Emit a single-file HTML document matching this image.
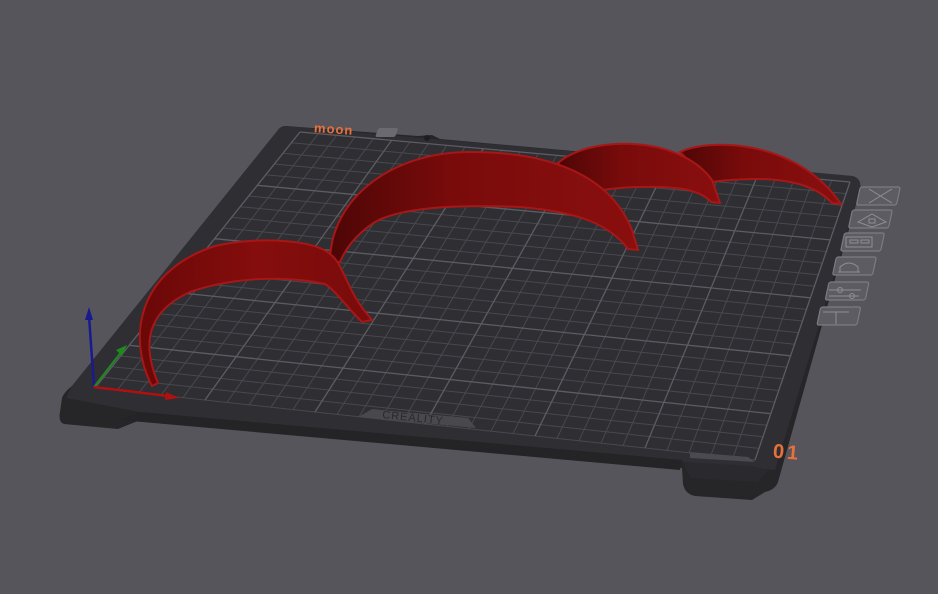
<!DOCTYPE html>
<html><head><meta charset="utf-8"><style>
html,body{margin:0;padding:0;background:#55555b;overflow:hidden}
svg{display:block}
</style></head><body>
<svg id="s" width="938" height="594" viewBox="0 0 938 594" xmlns="http://www.w3.org/2000/svg">
<defs>
<linearGradient id="r1" x1="0" x2="1" y1="0" y2="0"><stop offset="0" stop-color="#6a0808"/><stop offset="0.5" stop-color="#850d0d"/><stop offset="1" stop-color="#7a0c0c"/></linearGradient>
<linearGradient id="r2" x1="0" x2="1" y1="0" y2="0"><stop offset="0" stop-color="#4e0606"/><stop offset="0.4" stop-color="#7a0b0b"/><stop offset="1" stop-color="#8a0f0f"/></linearGradient>
</defs>
<rect width="938" height="594" fill="#55555b"/>
<path d="M286,126 L418,136 L432,135 L440,139 L852,176 Q862,178 860,190 L778,482 Q775,490 765,492 L752,500 L695,496 Q685,494 683,484 L682,468 L140,420 L118,429 L64,424 Q58,422 60,412 L62,398 Q64,392 72,386 L278,130 Q281,126 286,126 Z" fill="#262629"/>
<path d="M286,126 L852,176 Q862,178 860,190 L775,470 L140,412 L66,398 L72,386 L278,130 Q281,126 286,126 Z" fill="#2e2e33"/>
<path d="M120,420 L680,470 L682,460 L140,412 Z" fill="#242427"/>
<path d="M683,462 L752,466 L768,470 L758,482 L690,478 Z" fill="#2a2a2e"/>
<g id="grid" stroke="#4a4a50" stroke-width="1" fill="none"></g>
<path d="M358,417 L372,409 L468,418 L476,428 Z" fill="#48484d"/>
<text x="382" y="422" font-family="Liberation Sans,sans-serif" font-size="11" fill="#2a2a2e" transform="rotate(6 420 420)" letter-spacing="1">CREALITY</text>
<path d="M690,452 L748,457 L755,462 L690,458 Z" fill="#4a4a50"/>
<text x="314" y="134" font-family="Liberation Sans,sans-serif" font-weight="bold" font-size="13" letter-spacing="1" fill="#e8703a" transform="rotate(4 340 130)">moon</text>
<rect x="378" y="128" width="20" height="9" rx="2" fill="#6a6a70" transform="skewX(-20) translate(47 0)"/>
<circle cx="427" cy="138" r="3" fill="#1e1e21"/>
<text x="773" y="459" font-family="Liberation Sans,sans-serif" font-weight="bold" font-size="20" letter-spacing="3" fill="#e8703a" transform="rotate(5 790 452)">01</text>
<g fill="#5c5c62" stroke="#7c7c82" stroke-width="1.2">
<rect x="860" y="187" width="40" height="18" rx="2" transform="skewX(-12) translate(40 0)"/>
<rect x="852" y="210" width="40" height="18" rx="2" transform="skewX(-12) translate(45 0)"/>
<rect x="844" y="233" width="40" height="18" rx="2" transform="skewX(-12) translate(50 0)"/>
<rect x="836" y="257" width="40" height="18" rx="2" transform="skewX(-12) translate(55 0)"/>
<rect x="828" y="282" width="40" height="18" rx="2" transform="skewX(-12) translate(61 0)"/>
<rect x="820" y="307" width="40" height="18" rx="2" transform="skewX(-12) translate(66 0)"/>
</g>
<g stroke="#8e8e94" stroke-width="1" fill="none">
<path d="M869,189 L892,203 M892,189 L869,203"/>
<path d="M858,222 L872,214 L886,222 L872,227 Z M869,219 h6 v4 h-6z"/>
<path d="M846,237 h26 v10 h-26z M850,240 h8 v3 h-8z M861,240 h8 v3 h-8z"/>
<path d="M838,272 h22 M840,272 v-5 q9,-8 18,0 v5"/>
<path d="M829,290 h32 M829,296 h30"/><circle cx="840" cy="290" r="2.5"/><circle cx="852" cy="296" r="2.5"/>
<path d="M823,312 h26 M836,312 v12"/>
</g>
<path d="M680,152 C710,138 790,140 835,196 L841,204 L832,203 C820,190 800,180 760,179 C735,179 715,181 708,183 L692,164 Z" fill="url(#r2)" stroke="#a81717" stroke-width="2"/>
<path d="M558,163 C590,135 680,135 712,180 L720,203 L711,202 C700,190 680,186 640,187 C620,187 600,190 590,193 L570,180 Z" fill="url(#r2)" stroke="#a81717" stroke-width="2"/>
<path d="M330,262 C330,200 390,152 470,152 C550,152 610,175 632,230 L638,250 L628,249 C610,225 580,212 520,207 C450,204 400,208 375,222 C355,235 345,250 340,262 Z" fill="url(#r2)" stroke="#a81717" stroke-width="2"/>
<path d="M152,386 C128,340 135,272 215,246 C260,236 315,240 330,254 C345,265 345,290 372,320 L362,322 C345,305 335,290 325,284 C290,276 235,276 190,292 C150,310 140,340 158,383 Z" fill="url(#r1)" stroke="#a81717" stroke-width="2"/>
<line x1="94" y1="387" x2="89" y2="316" stroke="#1a1a90" stroke-width="2.5"/>
<path d="M89,307 L85,320 L93,320 Z" fill="#1a1a90"/>
<line x1="94" y1="387" x2="122" y2="351" stroke="#1e8a1e" stroke-width="2"/>
<path d="M127,345 L116,350 L122,356 Z" fill="#1e8a1e"/>
<line x1="94" y1="387" x2="168" y2="396" stroke="#b01010" stroke-width="2.5"/>
<path d="M179,398 L166,392 L165,400 Z" fill="#b01010"/>
</svg>
<script>
(function(){
var TL=[300,132],TR=[850,182],BL=[95,388],BR=[755,460];
function P(u,v){var x=(1-u)*(1-v)*TL[0]+u*(1-v)*TR[0]+(1-u)*v*BL[0]+u*v*BR[0];
var y=(1-u)*(1-v)*TL[1]+u*(1-v)*TR[1]+(1-u)*v*BL[1]+u*v*BR[1];return [x,y];}
var g=document.getElementById('grid'),ns='http://www.w3.org/2000/svg',d='',dm='';
var C=30,R=24;
for(var i=0;i<=C;i++){var a=P(i/C,0),b=P(i/C,1);var s='M'+a[0].toFixed(1)+','+a[1].toFixed(1)+'L'+b[0].toFixed(1)+','+b[1].toFixed(1);if(i%5==0)dm+=s;else d+=s;}
for(var j=0;j<=R;j++){var a=P(0,j/R),b=P(1,j/R);var s='M'+a[0].toFixed(1)+','+a[1].toFixed(1)+'L'+b[0].toFixed(1)+','+b[1].toFixed(1);if(j%5==0)dm+=s;else d+=s;}
var p1=document.createElementNS(ns,'path');p1.setAttribute('d',d);p1.setAttribute('stroke','#48484e');g.appendChild(p1);
var p2=document.createElementNS(ns,'path');p2.setAttribute('d',dm);p2.setAttribute('stroke','#5c5c62');p2.setAttribute('stroke-width','1.3');g.appendChild(p2);
})();
</script>
</body></html>
